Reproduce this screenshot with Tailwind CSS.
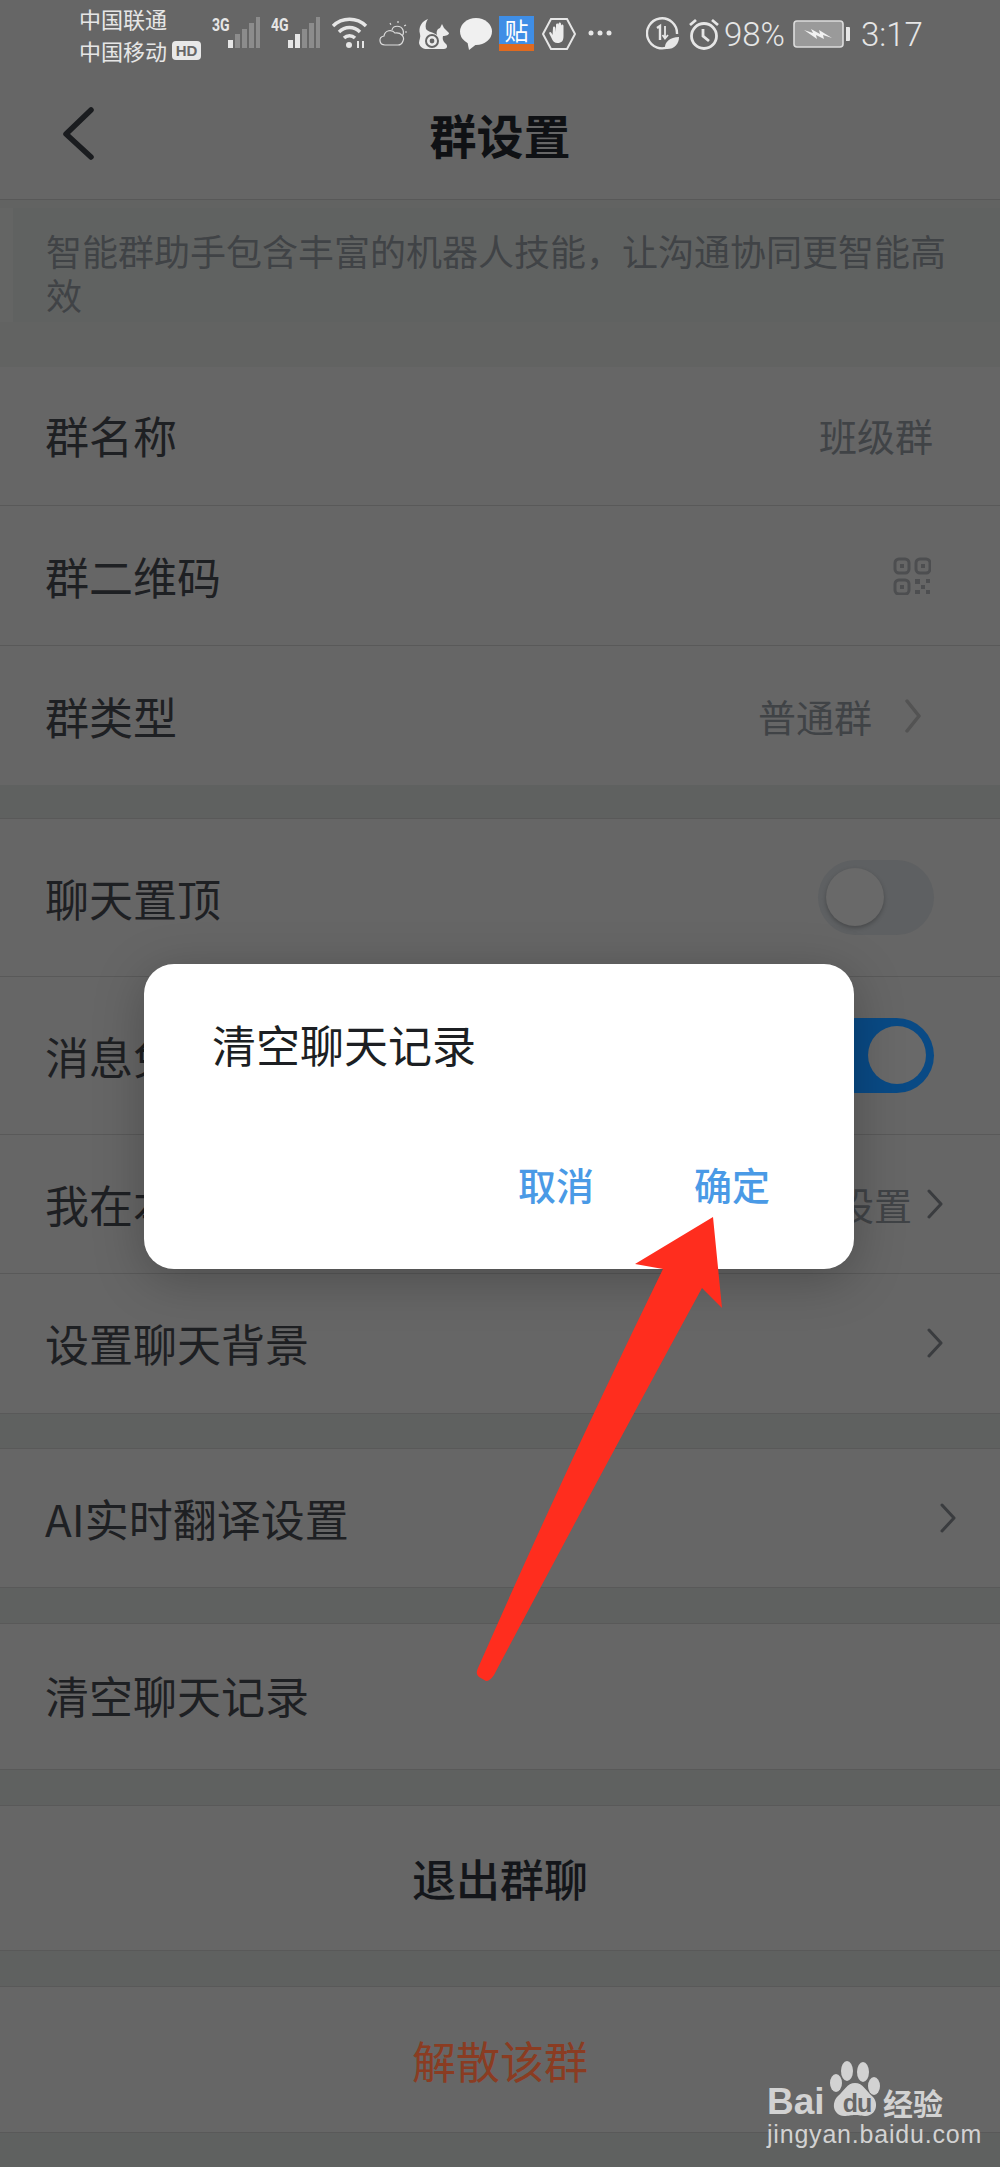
<!DOCTYPE html>
<html lang="zh">
<head>
<meta charset="utf-8">
<script src="https://cdn.jsdelivr.net/npm/@tailwindcss/browser@4"></script>
</head>
<body class="m-0">
<div class="relative w-[1000px] h-[2167px] overflow-hidden bg-[#5f6160] text-[#1e2023] font-['Noto_Sans_CJK_SC','Noto_Sans',sans-serif]">

  <!-- status bar -->
  <div class="h-[75px] bg-[#666666] flex items-start pl-[79px] text-[#e6e6e6]">
    <div class="w-[122px] shrink-0 pt-[2px] text-[22px] leading-[32px] whitespace-nowrap">
      <div>中国联通</div>
      <div class="flex items-center"><span class="shrink-0">中国移动</span><span class="shrink-0 ml-[5px] w-[29px] h-[19px] rounded-[4px] bg-[#e8e8e8] text-[#666666] text-[15px] leading-[19px] font-bold text-center font-['Liberation_Sans',sans-serif]">HD</span></div>
    </div>
    <div class="ml-[11px] w-[59px] h-[75px] relative">
      <span class="absolute left-0 top-[15px] text-[18px] leading-[20px] font-bold font-['Roboto',sans-serif] origin-left scale-x-[.78]">3G</span>
      <svg class="absolute left-[16px] top-[16px]" width="34" height="34" viewBox="0 0 34 34"><rect x="0" y="24" width="5" height="8" fill="#e6e6e6"/><rect x="7" y="18" width="5" height="14" fill="#8c8c8c"/><rect x="14" y="13" width="5" height="19" fill="#8c8c8c"/><rect x="21" y="7" width="5" height="25" fill="#8c8c8c"/><rect x="28" y="1" width="4" height="31" fill="#8c8c8c"/></svg>
    </div>
    <div class="w-[59px] h-[75px] relative">
      <span class="absolute left-0 top-[15px] text-[18px] leading-[20px] font-bold font-['Roboto',sans-serif] origin-left scale-x-[.78]">4G</span>
      <svg class="absolute left-[17px] top-[16px]" width="34" height="34" viewBox="0 0 34 34"><rect x="0" y="24" width="5" height="8" fill="#e6e6e6"/><rect x="7" y="18" width="5" height="14" fill="#e6e6e6"/><rect x="14" y="13" width="5" height="19" fill="#8c8c8c"/><rect x="21" y="7" width="5" height="25" fill="#8c8c8c"/><rect x="28" y="1" width="4" height="31" fill="#8c8c8c"/></svg>
    </div>
    <svg class="ml-[1px] mt-[16px]" width="38" height="34" viewBox="0 0 38 34" fill="none" stroke="#e6e6e6" stroke-width="3.4"><path d="M2 10C11 1 26 1 35 10"/><path d="M8 16C14 10 23 10 29 16"/><path d="M13 22C16 19 21 19 24 22"/><circle cx="18" cy="29" r="3" fill="#e6e6e6" stroke="none"/><path d="M27 25v7M32 25v7" stroke-width="2"/></svg>
    <svg class="ml-[8px] mt-[19px]" width="31" height="30" viewBox="0 0 31 30" fill="none" stroke="#dcdcdc" stroke-width="1.2"><path d="M8 26C2 26 1 18 7 17C8 11 15 10 18 14C24 13 28 18 26 22C25 25 23 26 21 26Z"/><path d="M15 11C16 6 24 6 26 11C27 14 26 16 25 17"/><path d="M21 2v2M29 6l-2 1M30 13h-2M13 4l1 2" stroke-dasharray="2 1"/></svg>
    <svg class="ml-[9px] mt-[18px]" width="33" height="32" viewBox="0 0 33 32" fill="#ececec"><path d="M11 1C5 3 1 9 3 16C4 19 2 22 2 25C3 29 6 31 10 31H27C30 31 31 28 29 26C27 24 25 22 26 18C29 18 32 17 32 15L27 10L25 6L23 10C20 11 19 14 20 17C16 14 11 14 9 11C8 7 9 4 11 1Z"/><circle cx="15" cy="23" r="6" fill="none" stroke="#666666" stroke-width="2"/><circle cx="15" cy="23" r="2.4" fill="#666666"/></svg>
    <svg class="ml-[9px] mt-[18px]" width="34" height="32" viewBox="0 0 34 32" fill="#f0f0f0"><ellipse cx="17" cy="13.500" rx="16" ry="13.500"/><path d="M8 22L10 32L19 25Z"/></svg>
    <div class="relative ml-[6px] mt-[16px] w-[35px] h-[35px] bg-[#3f8ee6] flex flex-col items-center">
      <span class="text-white text-[24px] leading-[28px] h-[28px]">贴</span>
      <span class="absolute bottom-0 left-0 w-full h-[7px] bg-[#df6a20]"></span>
    </div>
    <svg class="ml-[8px] mt-[17px]" width="34" height="34" viewBox="0 0 34 34"><path d="M9 2H25L33 17L25 32H9L1 17Z" fill="none" stroke="#e6e6e6" stroke-width="2"/><path d="M11 11c0-2 2-2 2.500 0l.5 4V8c0-2 2.500-2 2.500 0v6V7c0-2 2.500-2 2.500 0v7V9c0-2 2.500-2 2.500 0v10c0 5-2 7-6 7c-3 0-5-2-6-5l-2-4c-1-2 1-3 2-1l1 2Z" fill="#ececec"/></svg>
    <svg class="ml-[12px] mt-[29px]" width="25" height="8" viewBox="0 0 25 8" fill="#e6e6e6"><circle cx="3" cy="4" r="2.500"/><circle cx="12" cy="4" r="2.500"/><circle cx="21" cy="4" r="2.500"/></svg>
    <svg class="ml-[33px] mt-[17px]" width="33" height="33" viewBox="0 0 33 33" fill="none"><path d="M24 29A15 15 0 1 1 31 17" stroke="#e6e6e6" stroke-width="2.400"/><path d="M11 11L14 9V23" stroke="#e6e6e6" stroke-width="2.400"/><path d="M19 9V21M16.500 18L19 21.500L22 18" stroke="#e6e6e6" stroke-width="1.800"/><path d="M19 32C18 25 24 20 33 20C33 27 28 33 19 32Z" fill="#e6e6e6"/></svg>
    <svg class="ml-[9px] mt-[17px]" width="32" height="33" viewBox="0 0 32 33" fill="none" stroke="#e6e6e6" stroke-width="2.800"><circle cx="16" cy="19" r="12.500"/><path d="M15 12V19L21 24"/><path d="M2 8L8 3M30 8L24 3"/></svg>
    <span class="ml-[4px] mt-[15px] text-[33px] leading-[40px] font-light font-['Roboto',sans-serif] text-[#e6e6e6] w-[64px] whitespace-nowrap">98%</span>
    <svg class="ml-[5px] mt-[20px]" width="58" height="28" viewBox="0 0 58 28"><rect x="1" y="1" width="49" height="26" rx="3" fill="#9a9a9a" stroke="#dcdcdc" stroke-width="1.600"/><path d="M53 7h3a1 1 0 0 1 1 1v12a1 1 0 0 1-1 1h-3Z" fill="#e6e6e6"/><path d="M11 10L20 13L18 9L27 14L26 10L39 18L30 15L31 19L23 15L24 19Z" fill="#f2f2f2"/></svg>
    <span class="ml-[10px] mt-[15px] text-[33px] leading-[40px] font-light font-['Roboto',sans-serif] text-[#e6e6e6] whitespace-nowrap">3:17</span>
  </div>

  <!-- nav bar -->
  <div class="h-[125px] bg-[#666666] border-b border-[#585858] relative flex items-center justify-center pb-[6px]">
    <svg class="absolute left-[60px] top-[30px]" width="36" height="56" viewBox="0 0 36 56" fill="none" stroke="#1a1c1f" stroke-width="5.500" stroke-linecap="round" stroke-linejoin="round"><path d="M31 5L6 29L31 52"/></svg>
    <h1 class="text-[47px] leading-[60px] font-bold text-[#0f1114]">群设置</h1>
  </div>

  <!-- notice -->
  <div class="h-[8px] bg-[#626362]"></div>
  <div class="h-[114px] flex bg-[#606261]">
    <div class="w-[13px] shrink-0 bg-[#646564]"></div>
    <p class="pl-[33px] pr-[50px] pt-[20px] text-[36px] leading-[44px] text-[#404346]">智能群助手包含丰富的机器人技能，让沟通协同更智能高效</p>
  </div>
  <div class="h-[45px] bg-[#626362]"></div>

  <!-- group info -->
  <div class="bg-[#666666]">
    <div class="h-[139px] border-b border-[#595959] flex items-center justify-between pl-[45px] pr-[67px] pb-[2px]"><span class="text-[44px] leading-[60px]">群名称</span><span class="text-[38px] leading-[50px] text-[#404346]">班级群</span></div>
    <div class="h-[140px] border-b border-[#595959] flex items-center justify-between pl-[45px] pr-[69px]"><span class="text-[44px] leading-[60px]">群二维码</span>
      <svg width="38" height="38" viewBox="0 0 38 38" fill="none" stroke="#4d4e50" stroke-width="3"><rect x="2" y="2" width="14" height="14" rx="4"/><rect x="23" y="2" width="14" height="14" rx="4"/><rect x="2" y="23" width="14" height="14" rx="4"/><g fill="#4d4e50" stroke="none"><rect x="7" y="7" width="4" height="4"/><rect x="28" y="7" width="4" height="4"/><rect x="7" y="28" width="4" height="4"/><rect x="22" y="22" width="5" height="5"/><rect x="33" y="22" width="4" height="4"/><rect x="28" y="28" width="4" height="4"/><rect x="22" y="33" width="5" height="4"/><rect x="33" y="33" width="4" height="4"/></g></svg>
    </div>
    <div class="h-[139px] flex items-center pl-[45px] pr-[79px]"><span class="text-[44px] leading-[60px]">群类型</span><span class="ml-auto text-[38px] leading-[50px] text-[#404346]">普通群</span>
      <svg class="ml-[33px]" width="16" height="34" viewBox="0 0 16 34" fill="none" stroke="#535353" stroke-width="3.500" stroke-linecap="round" stroke-linejoin="round"><path d="M2 2L14 17L2 32"/></svg>
    </div>
  </div>
  <div class="h-[34px] border-b border-[#595959]"></div>

  <!-- chat settings -->
  <div class="bg-[#666666]">
    <div class="h-[158px] border-b border-[#595959] flex items-center justify-between pl-[45px] pr-[66px]"><span class="text-[44px] leading-[60px]">聊天置顶</span>
      <div class="relative w-[116px] h-[75px] rounded-full bg-[#5e6062]"><span class="absolute left-[8px] top-[8px] w-[58px] h-[58px] rounded-full bg-[#696969] shadow-[0_2px_4px_rgba(0,0,0,0.25)]"></span></div>
    </div>
    <div class="h-[158px] border-b border-[#595959] flex items-center justify-between pl-[45px] pr-[66px]"><span class="text-[44px] leading-[60px]">消息免打扰</span>
      <div class="relative w-[116px] h-[75px] rounded-full bg-[#094a85]"><span class="absolute right-[8px] top-[8px] w-[58px] h-[58px] rounded-full bg-[#696969]"></span></div>
    </div>
    <div class="h-[139px] border-b border-[#595959] flex items-center pl-[45px] pr-[57px]"><span class="text-[44px] leading-[60px]">我在本群的昵称</span><span class="ml-auto text-[38px] leading-[50px] text-[#404346]">未设置</span>
      <svg class="ml-[15px]" width="16" height="30" viewBox="0 0 16 30" fill="none" stroke="#3a3c3f" stroke-width="3" stroke-linecap="round" stroke-linejoin="round"><path d="M2 2L14 15L2 28"/></svg>
    </div>
    <div class="h-[140px] border-b border-[#595959] flex items-center justify-between pl-[45px] pr-[57px] pb-[2px]"><span class="text-[44px] leading-[60px]">设置聊天背景</span>
      <svg width="16" height="30" viewBox="0 0 16 30" fill="none" stroke="#3a3c3f" stroke-width="3" stroke-linecap="round" stroke-linejoin="round"><path d="M2 2L14 15L2 28"/></svg>
    </div>
  </div>
  <div class="h-[35px] border-b border-[#595959]"></div>

  <div class="bg-[#666666] h-[139px] border-b border-[#595959] flex items-center justify-between pl-[45px] pr-[44px]"><span class="text-[44px] leading-[60px]">AI实时翻译设置</span>
    <svg width="16" height="30" viewBox="0 0 16 30" fill="none" stroke="#3a3c3f" stroke-width="3" stroke-linecap="round" stroke-linejoin="round"><path d="M2 2L14 15L2 28"/></svg>
  </div>
  <div class="h-[36px] border-b border-[#595959]"></div>

  <div class="bg-[#666666] h-[146px] border-b border-[#595959] flex items-center pl-[45px] pb-[4px]"><span class="text-[44px] leading-[60px]">清空聊天记录</span></div>
  <div class="h-[36px] border-b border-[#595959]"></div>
  <div class="bg-[#666666] h-[145px] border-b border-[#595959] flex items-center justify-center"><span class="text-[44px] leading-[60px] font-medium text-[#14161a]">退出群聊</span></div>
  <div class="h-[36px] border-b border-[#595959]"></div>
  <div class="bg-[#666666] h-[146px] border-b border-[#595959] flex items-center justify-center"><span class="text-[44px] leading-[60px] text-[#8a3c22]">解散该群</span></div>

  <!-- dialog -->
  <div class="absolute left-[144px] top-[964px] w-[710px] h-[305px] rounded-[30px] bg-white shadow-[0_10px_50px_rgba(0,0,0,0.25)] pl-[68px] pr-[84px] pt-[58px]">
    <p class="text-[44px] leading-[44px] text-[#1c1f23]">清空聊天记录</p>
    <div class="mt-[98px] flex justify-end gap-[100px] text-[38px] leading-[40px] font-medium text-[#4a9ae6]">
      <span>取消</span><span>确定</span>
    </div>
  </div>

  <!-- red arrow annotation -->
  <svg class="absolute left-0 top-0" width="1000" height="2167" viewBox="0 0 1000 2167"><path d="M713 1217L635 1264L663 1269Q565 1470 478 1668Q475 1674 479 1677L486 1681Q490 1681 494 1675Q600 1475 702 1288L722 1308Z" fill="#ff2d1e"/></svg>

  <!-- watermark -->
  <div class="absolute left-[767px] top-[2060px] w-[180px] h-[90px] text-[#d2d2d2]">
    <span class="absolute left-0 top-[20px] text-[37px] leading-[44px] font-bold font-['Liberation_Sans',sans-serif]">Bai</span>
    <svg class="absolute left-[63px] top-0" width="52" height="58" viewBox="0 0 52 58" fill="#d2d2d2"><ellipse cx="17" cy="11" rx="6" ry="10"/><ellipse cx="33" cy="12" rx="6" ry="10"/><ellipse cx="6" cy="23" rx="6" ry="9"/><ellipse cx="44" cy="26" rx="6" ry="9"/><path d="M25 23C33 23 36 31 42 36C49 42 47 55 36 56C31 56 29 55 25 55C21 55 19 56 14 56C3 55 1 43 8 36C14 31 17 23 25 23Z"/></svg>
    <span class="absolute left-[70px] top-[29px] w-[40px] text-center text-[25px] leading-[28px] font-bold text-[#666666] tracking-[-1px] font-['Liberation_Sans',sans-serif]">du</span>
    <span class="absolute left-[116px] top-[24px] text-[30px] leading-[36px] font-bold whitespace-nowrap">经验</span>
    <span class="absolute left-0 top-[59px] text-[25px] leading-[30px] tracking-[0.8px] whitespace-nowrap font-['Liberation_Sans',sans-serif]">jingyan.baidu.com</span>
  </div>
</div>
</body>
</html>
